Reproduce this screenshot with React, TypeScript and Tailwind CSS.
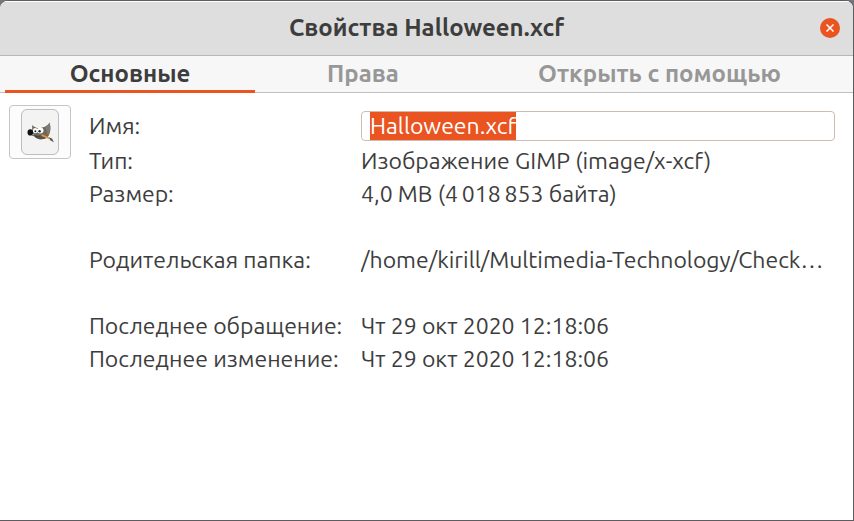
import { useEffect, useRef, useState } from "react";

const tabs = ["Основные", "Права", "Открыть с помощью"];

const groups = [
  [
    ["Тип:", "Изображение GIMP (image/x-xcf)"],
    ["Размер:", "4,0 MB (4\u2009018\u2009853 байта)"],
  ],
  [["Родительская папка:", "/home/kirill/Multimedia-Technology/Check…"]],
  [
    ["Последнее обращение:", "Чт 29 окт 2020 12:18:06"],
    ["Последнее изменение:", "Чт 29 окт 2020 12:18:06"],
  ],
];

function WilberIcon() {
  return (
    <svg viewBox="0 0 28 23" className="h-[23px] w-7" aria-hidden="true">
      <path
        d="M6.5 4C8.5 6.5 11 7.3 14 7C18 6.6 22 5 23.6 1.6C24.8 6 24.8 12 22 15.5C19.5 18.8 13 19.2 9.5 16.5C6.5 14 5.5 8 6.5 4Z"
        fill="#6d695e"
      />
      <path d="M23.6 1.6C24.8 6 24.8 12 22 15.5C21.5 12 20.5 9 19 6C21 5 22.8 3.5 23.6 1.6Z" fill="#7f7a6e" />
      <path d="M8.5 14C12 16.5 17 16.5 20.5 14.5L22 15.5C19.5 18.8 13 19.2 9.5 16.5Z" fill="#57534a" />
      <ellipse cx="9.2" cy="9.6" rx="2.3" ry="2.7" fill="#fff" />
      <ellipse cx="14.2" cy="9.6" rx="3.3" ry="3" fill="#fff" />
      <circle cx="9.4" cy="10.2" r="1" fill="#222" />
      <circle cx="13.6" cy="10.2" r="1.2" fill="#222" />
      <ellipse cx="4.3" cy="11.4" rx="2.8" ry="3.1" fill="#111" />
      <path d="M6 14.2C10 15.8 14 15.4 17.5 14.4" fill="none" stroke="#33302a" strokeWidth="0.8" />
      <path d="M15.5 14L24 17.6" stroke="#e8973e" strokeWidth="1.8" />
      <path d="M23.3 16.6L26 17.6L28 21.2L24.2 19.2Z" fill="#55575a" />
    </svg>
  );
}

export default function App() {
  const [active, setActive] = useState(0);
  const nameRef = useRef<HTMLInputElement>(null);

  useEffect(() => {
    nameRef.current?.focus();
    nameRef.current?.select();
  }, []);

  return (
    <div className="bg-[#77767a]">
      <main className="flex min-h-screen flex-col overflow-hidden rounded-t-lg border-t border-r border-b border-[#5e5c5f] bg-white font-['Ubuntu','Noto_Sans',sans-serif] text-[23px] leading-[33px] text-[#3d3d3d]">
        <header className="grid h-[55px] shrink-0 grid-cols-[32px_1fr_32px] items-center border-t border-b border-t-white border-b-[#b6b6b6] bg-[#dedede] px-[13px] pb-[2px]">
          <h1 className="col-start-2 text-center text-2xl font-bold">Свойства Halloween.xcf</h1>
          <button
            type="button"
            aria-label="Закрыть"
            className="flex size-5 items-center justify-center justify-self-end rounded-full bg-[#e95420]"
          >
            <svg viewBox="0 0 8 8" className="size-2" aria-hidden="true">
              <path d="M0.5 0.5L7.5 7.5M7.5 0.5L0.5 7.5" stroke="#fff" strokeWidth="1.5" />
            </svg>
          </button>
        </header>

        <div
          role="tablist"
          className="grid h-[37px] shrink-0 grid-cols-[250fr_216fr_377fr] bg-[#f7f7f7] px-[5px] shadow-[inset_0_-1px_0_#c0c0c0]"
        >
          {tabs.map((tab, index) => (
            <button
              key={tab}
              type="button"
              role="tab"
              aria-selected={active === index}
              onClick={() => setActive(index)}
              className="border-b-3 border-transparent pt-[2px] text-center text-2xl font-bold whitespace-nowrap text-[#979797] aria-selected:border-[#e95420] aria-selected:text-[#3d3d3d]"
            >
              {tab}
            </button>
          ))}
        </div>

        <section className="flex items-start gap-[18px] pt-3 pr-[18px] pl-[9px]">
          <button
            type="button"
            aria-label="Значок файла"
            className="flex h-[54px] w-[62px] shrink-0 items-center justify-center rounded border border-[#c6c6c6] bg-[#fcfcfc]"
          >
            <span className="flex h-[46px] w-[38px] items-center justify-center rounded-md border border-[#bdbdbd] bg-[#f3f3f3]">
              <WilberIcon />
            </span>
          </button>

          <div className="min-w-0 flex-1 pt-[6px]">
            <div className="mb-[3px] grid grid-cols-[260px_1fr] items-center gap-x-3">
              <label htmlFor="file-name" className="leading-[30px]">
                Имя:
              </label>
              <input
                id="file-name"
                ref={nameRef}
                defaultValue="Halloween.xcf"
                className="h-[30px] w-full min-w-0 rounded border border-[#cfbab4] bg-white px-2 pb-[2px] outline-none selection:bg-[#e95420] selection:text-white"
              />
            </div>
            <div className="flex flex-col gap-[33px]">
              {groups.map((rows) => (
                <dl key={rows[0][0]}>
                  {rows.map(([label, value]) => (
                    <div key={label} className="grid grid-cols-[260px_1fr] gap-x-3">
                      <dt className="whitespace-nowrap">{label}</dt>
                      <dd className="truncate">{value}</dd>
                    </div>
                  ))}
                </dl>
              ))}
            </div>
          </div>
        </section>
      </main>
    </div>
  );
}
